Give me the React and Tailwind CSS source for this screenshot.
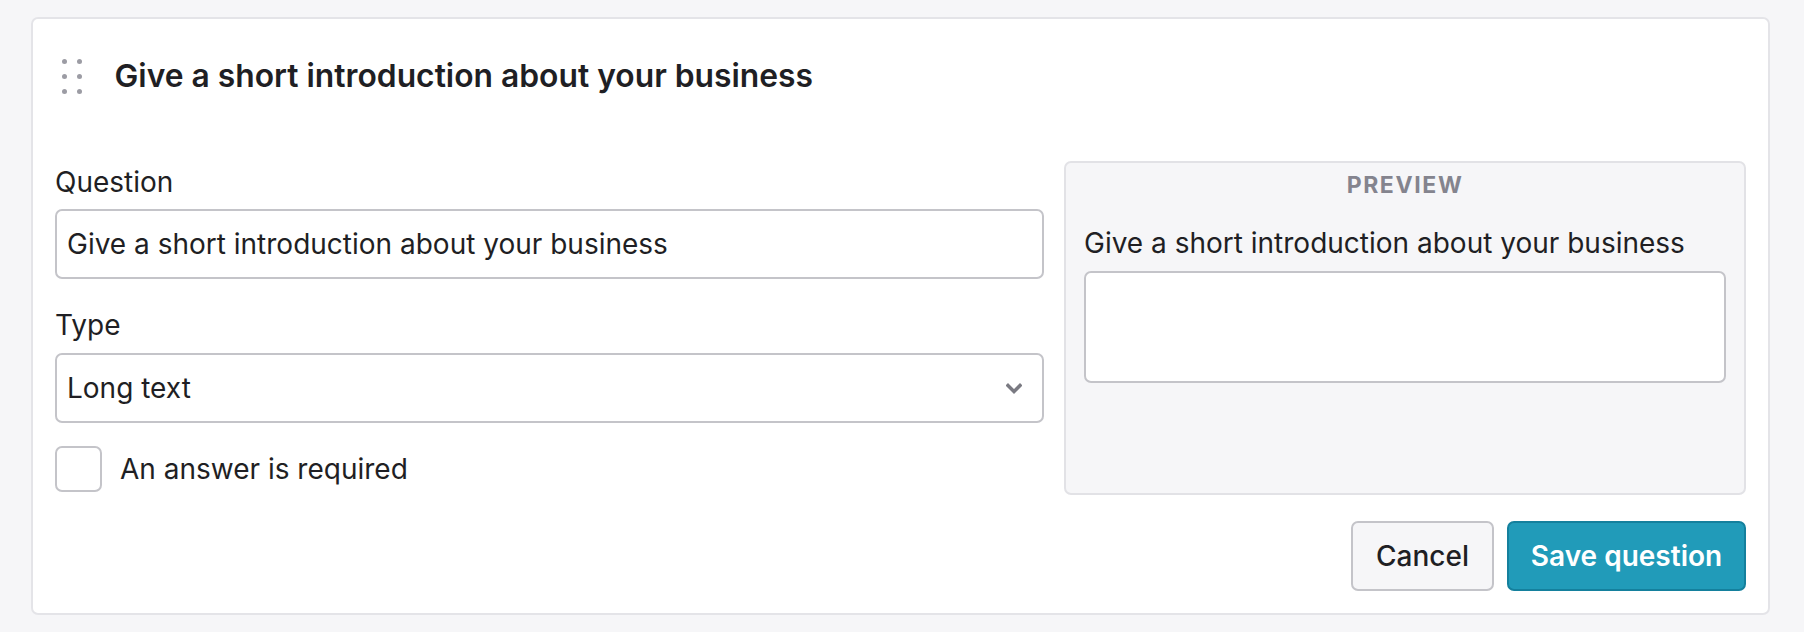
import { useState } from "react";

// Drag handle: 2 x 3 grey dots
function DragHandle() {
  return (
    <div className="grid grid-cols-2 gap-x-[9.5px] gap-y-[10px] ml-[7px] mr-[33px]">
      {[0, 1, 2, 3, 4, 5].map(i => (
        <span key={i} className="block w-[5px] h-[5px] rounded-full bg-[#9c9ca4]" />
      ))}
    </div>
  );
}

function Chevron() {
  return (
    <svg width="16" height="11" viewBox="0 0 16 11" fill="none">
      <path d="M2 2.5 L8 8.5 L14 2.5" stroke="#7a7a82" strokeWidth="3.4" strokeLinecap="square" />
    </svg>
  );
}

export default function App() {
  const [question, setQuestion] = useState("Give a short introduction about your business");
  const [required, setRequired] = useState(false);

  return (
    <div
      className="min-h-screen bg-[#f6f6f8] pt-[17px] pl-[31px] text-[#1f1f24]"
      style={{ fontFamily: "Inter, 'Liberation Sans', sans-serif" }}
    >
      <div className="w-[1739px] bg-white border-2 border-[#e4e4e8] rounded-[7px] p-[22px]">
        {/* Header */}
        <div className="flex items-center h-[68px] pt-[2px]">
          <DragHandle />
          <h2 className="text-[31.8px] font-semibold leading-none">{question}</h2>
        </div>

        <div className="flex gap-[20px] mt-[52px]">
          {/* Editor */}
          <div className="flex-1">
            <label className="block text-[28px] leading-[42px] mb-[6px]">Question</label>
            <input
              value={question}
              onChange={e => setQuestion(e.target.value)}
              className="w-full h-[70px] px-[10px] text-[28px] border-2 border-[#c4c4c9] rounded-[7px] outline-none"
            />

            <label className="block text-[28px] leading-[42px] mt-[25px] mb-[7px]">Type</label>
            <div className="flex items-center justify-between h-[70px] pl-[10px] pr-[20px] border-2 border-[#c4c4c9] rounded-[7px] text-[28px]">
              <span>Long text</span>
              <Chevron />
            </div>

            <label className="flex items-center gap-[18px] mt-[23px] cursor-pointer">
              <span
                onClick={() => setRequired(!required)}
                className="block w-[47px] h-[46px] border-2 border-[#c4c4c9] rounded-[7px] bg-white"
              />
              <span className="text-[28px] leading-[42px]">An answer is required</span>
            </label>
          </div>

          {/* Preview */}
          <div className="w-[682px] h-[334px] bg-[#f6f6f8] border-2 border-[#e2e2e6] rounded-[7px] pt-[5px] px-[18px]">
            <p className="text-center text-[23px] leading-[34px] font-bold tracking-[0.07em] text-[#84848e]">PREVIEW</p>
            <p className="text-[28px] leading-[42px] mt-[20px] mb-[7px]">{question}</p>
            <div className="h-[112px] bg-white border-2 border-[#c4c4c9] rounded-[7px]" />
          </div>
        </div>

        {/* Actions */}
        <div className="flex justify-end gap-[13px] mt-[26px]">
          <button className="w-[143px] h-[70px] bg-[#f6f6f8] border-2 border-[#c4c4c9] rounded-[7px] text-[28px] font-medium">
            Cancel
          </button>
          <button className="w-[239px] h-[70px] bg-[#219bb9] border-2 border-[#14809d] rounded-[7px] text-[28px] font-semibold text-white">
            Save question
          </button>
        </div>
      </div>
    </div>
  );
}
